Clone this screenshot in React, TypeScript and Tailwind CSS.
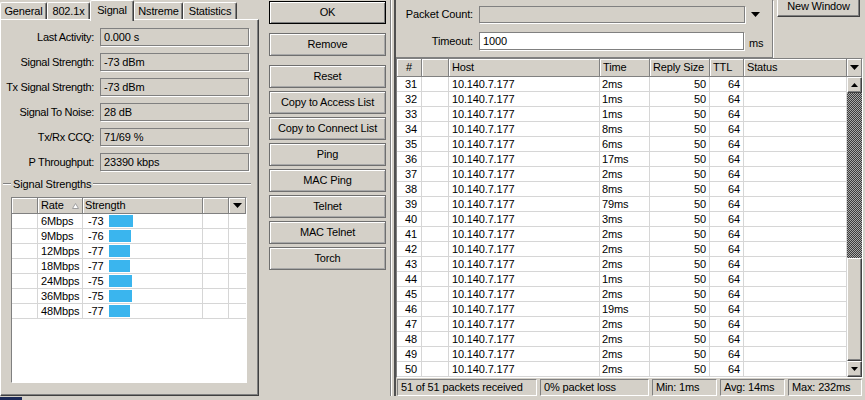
import React from "react";

// Classic Win98-style 3D edges, reused across the two windows.
const raised =
  "border border-t-white border-l-white border-r-[#404040] border-b-[#404040] shadow-[inset_-1px_-1px_0_#808080]";
const sunken = "border border-[#808080] border-r-white border-b-white";
const headCell =
  "h-full flex items-center border-r border-b border-[#808080] shadow-[inset_1px_1px_0_#fff]";
const gridCell = "h-full flex items-center border-r border-b border-[#d6d6d6]";

const tabs = [
  { label: "General", w: "w-[47px]" },
  { label: "802.1x", w: "w-[43px]" },
  { label: "Signal", w: "w-[44px]", active: true },
  { label: "Nstreme", w: "w-[49px]" },
  { label: "Statistics", w: "w-[54px]" },
];

const fields = [
  ["Last Activity:", "0.000 s"],
  ["Signal Strength:", "-73 dBm"],
  ["Tx Signal Strength:", "-73 dBm"],
  ["Signal To Noise:", "28 dB"],
  ["Tx/Rx CCQ:", "71/69 %"],
  ["P Throughput:", "23390 kbps"],
];

const rates = [
  { rate: "6Mbps", strength: -73, bar: 24 },
  { rate: "9Mbps", strength: -76, bar: 22 },
  { rate: "12Mbps", strength: -77, bar: 21 },
  { rate: "18Mbps", strength: -77, bar: 21 },
  { rate: "24Mbps", strength: -75, bar: 23 },
  { rate: "36Mbps", strength: -75, bar: 23 },
  { rate: "48Mbps", strength: -77, bar: 21 },
];

const buttons = [
  "Copy to Access List",
  "Copy to Connect List",
  "Ping",
  "MAC Ping",
  "Telnet",
  "MAC Telnet",
  "Torch",
];

const times = [
  "2ms", "1ms", "1ms", "8ms", "6ms", "17ms", "2ms", "8ms", "79ms", "3ms",
  "2ms", "2ms", "2ms", "1ms", "2ms", "19ms", "2ms", "2ms", "2ms", "2ms",
];

const DownArrow = () => (
  <svg width="9" height="5" viewBox="0 0 9 5">
    <polygon points="0,0 9,0 4.5,5" fill="#000" />
  </svg>
);

const UpArrow = () => (
  <svg width="7" height="4" viewBox="0 0 7 4">
    <polygon points="3.5,0 7,4 0,4" fill="#000" />
  </svg>
);

const Btn = ({ label, def }: { label: string; def?: boolean }) => (
  <div
    className={`h-[23px] w-[117px] flex items-center justify-center ${
      def
        ? "border border-black shadow-[inset_1px_1px_0_#fff,inset_-1px_-1px_0_#808080]"
        : "border border-[#6f6f6f] shadow-[inset_1px_1px_0_#fff,inset_-1px_-1px_0_#a8a8a8]"
    }`}
  >
    {label}
  </div>
);

function SignalPanel() {
  return (
    <div className="w-[259px] flex flex-col">
      <div className="relative z-10 flex h-[19px] items-end">
        {tabs.map((t) =>
          t.active ? (
            <div
              key={t.label}
              className={`${t.w} h-[21px] -mb-[2px] flex items-start justify-center pt-[4px] bg-[#d4d0c8] rounded-t-[2px] border-t border-l border-r border-t-white border-l-white border-r-[#404040] shadow-[inset_-1px_0_0_#808080]`}
            >
              {t.label}
            </div>
          ) : (
            <div
              key={t.label}
              className={`${t.w} h-[17px] flex items-center justify-center rounded-t-[2px] border-t border-l border-r border-t-white border-l-white border-r-[#404040] shadow-[inset_-1px_0_0_#808080]`}
            >
              {t.label}
            </div>
          )
        )}
      </div>
      <div className={`flex-1 flex flex-col pt-[8px] ${raised}`}>
        <div className="flex flex-col gap-[7px]">
          {fields.map(([label, value]) => (
            <div key={label} className="flex h-[18px] items-center">
              <div className="w-[93px] text-right whitespace-nowrap tracking-[-0.3px]">{label}</div>
              <div className="ml-[6px] w-[149px] h-[18px] flex items-center pl-[3px] border border-[#808080] shadow-[1px_1px_0_#fff]">
                {value}
              </div>
            </div>
          ))}
        </div>

        {/* Signal Strengths group */}
        <div className="mt-[7px] h-[12px] flex items-center">
          <div className="ml-[2px] w-[8px] h-[2px] border-t border-t-[#808080] border-b border-b-white" />
          <div className="px-[2px]">Signal Strengths</div>
          <div className="flex-1 mr-[7px] h-[2px] border-t border-t-[#808080] border-b border-b-white" />
        </div>

        <div className={`mt-[7px] ml-[10px] w-[236px] h-[186px] bg-white ${sunken}`}>
          <div className="flex h-[16px] bg-[#d4d0c8]">
            <div className={`${headCell} w-[26px]`} />
            <div className={`${headCell} w-[45px] pl-[3px] justify-between pr-[3px]`}>
              <span>Rate</span>
              <svg width="7" height="6" viewBox="0 0 7 6">
                <polygon points="3.5,0.5 6.5,5.5 0.5,5.5" fill="#fff" stroke="#a0a0a0" strokeWidth="1" />
              </svg>
            </div>
            <div className={`${headCell} w-[120px] pl-[2px]`}>Strength</div>
            <div className={`${headCell} w-[26px]`} />
            <div className={`${headCell} w-[17px] justify-center`}>
              <DownArrow />
            </div>
          </div>
          {rates.map((r) => (
            <div key={r.rate} className="flex h-[15px]">
              <div className={`${gridCell} w-[26px]`} />
              <div className={`${gridCell} w-[45px] pl-[3px]`}>{r.rate}</div>
              <div className={`${gridCell} w-[120px] pl-[5px]`}>
                <span className="w-[21px]">{r.strength}</span>
                <span className="h-[12px] bg-[#3ab5ee]" style={{ width: r.bar }} />
              </div>
              <div className={`${gridCell} w-[26px]`} />
              <div className="h-full w-[17px] border-b border-[#d6d6d6]" />
            </div>
          ))}
        </div>
      </div>
    </div>
  );
}

function PingWindow() {
  const cols = ["w-[25px]", "w-[27px]", "w-[151px]", "w-[50px]", "w-[60px]", "w-[34px]", "w-[103px]"];
  return (
    <div className="flex-1 flex flex-col">
      <div className="h-[58px] flex">
        <div className="w-[377px] h-[58px] border-r border-b border-[#808080] shadow-[1px_1px_0_#fff]">
          <div className="mt-[6px] h-[17px] flex items-center">
            <div className="w-[77px] text-right">Packet Count:</div>
            <div className="ml-[6px] w-[266px] h-[17px] border border-[#808080] shadow-[1px_1px_0_#fff]" />
            <div className="ml-[6px] flex items-center">
              <DownArrow />
            </div>
          </div>
          <div className="mt-[9px] h-[18px] flex items-center">
            <div className="w-[77px] text-right">Timeout:</div>
            <div className="ml-[6px] w-[265px] h-[18px] flex items-center pl-[3px] bg-white border border-[#808080] shadow-[1px_1px_0_#fff]">
              1000
            </div>
            <div className="ml-[5px] mt-[4px]">ms</div>
          </div>
        </div>
        <div className="ml-[4px] w-[83px] h-[17px] flex items-start justify-center pt-[1px] border-l border-r border-b border-l-white border-r-[#404040] border-b-[#404040] shadow-[inset_-1px_-1px_0_#808080]">
          New Window
        </div>
      </div>

      <div className={`w-[467px] h-[320px] flex flex-col ${sunken} shadow-[inset_1px_1px_0_#404040]`}>
        <div className="flex h-[18px] bg-[#d4d0c8]">
          <div className={`${headCell} ${cols[0]} justify-center`}>#</div>
          <div className={`${headCell} ${cols[1]}`} />
          <div className={`${headCell} ${cols[2]} pl-[3px]`}>Host</div>
          <div className={`${headCell} ${cols[3]} pl-[3px]`}>Time</div>
          <div className={`${headCell} ${cols[4]} pl-[3px]`}>Reply Size</div>
          <div className={`${headCell} ${cols[5]} pl-[3px]`}>TTL</div>
          <div className={`${headCell} ${cols[6]} pl-[3px]`}>Status</div>
          <div className={`${headCell} w-[15px] justify-center`}>
            <DownArrow />
          </div>
        </div>
        <div className="flex h-[300px]">
          <div className="w-[450px] bg-white">
            {times.map((t, i) => (
              <div key={i} className="flex h-[15px]">
                <div className={`${gridCell} ${cols[0]} justify-end pr-[4px]`}>{31 + i}</div>
                <div className={`${gridCell} ${cols[1]}`} />
                <div className={`${gridCell} ${cols[2]} pl-[3px]`}>10.140.7.177</div>
                <div className={`${gridCell} ${cols[3]} pl-[2px]`}>{t}</div>
                <div className={`${gridCell} ${cols[4]} justify-end pr-[3px]`}>50</div>
                <div className={`${gridCell} ${cols[5]} justify-end pr-[3px]`}>64</div>
                <div className={`${gridCell} ${cols[6]}`} />
              </div>
            ))}
          </div>
          <div className="w-[15px] flex flex-col">
            <div className={`h-[16px] flex items-center justify-center bg-[#d4d0c8] ${raised}`}>
              <UpArrow />
            </div>
            <div className="h-[165px] bg-[repeating-conic-gradient(#3c3c3c_0%_25%,#a8a8a8_0%_50%)] bg-[length:2px_2px]" />
            <div className={`h-[103px] bg-[#d4d0c8] ${raised}`} />
            <div className={`h-[16px] flex items-center justify-center bg-[#d4d0c8] ${raised}`}>
              <span className="rotate-180 flex">
                <UpArrow />
              </span>
            </div>
          </div>
        </div>
      </div>

      <div className="mt-[1px] h-[17px] flex gap-[3px] pl-[1px]">
        <div className={`w-[140px] flex items-center pl-[3px] ${sunken}`}>51 of 51 packets received</div>
        <div className={`w-[109px] flex items-center pl-[3px] ${sunken}`}>0% packet loss</div>
        <div className={`w-[65px] flex items-center pl-[3px] ${sunken}`}>Min: 1ms</div>
        <div className={`w-[65px] flex items-center pl-[3px] ${sunken}`}>Avg: 14ms</div>
        <div className={`w-[74px] flex items-center pl-[3px] ${sunken}`}>Max: 232ms</div>
      </div>
    </div>
  );
}

export default function App() {
  return (
    <div className="w-[865px] h-[400px] overflow-hidden bg-[#d4d0c8] text-[11px] leading-none tracking-[-0.15px] text-black font-['Liberation_Sans',Arial,sans-serif] flex flex-col">
      <div className="h-[396px] flex">
        <div className="w-[390px] flex">
          <SignalPanel />
          <div className="ml-[10px] pt-[1px] flex flex-col">
            <Btn label="OK" def />
            <div className="mt-[9px]">
              <Btn label="Remove" />
            </div>
            <div className="mt-[9px] flex flex-col gap-[3px]">
              <Btn label="Reset" />
              {buttons.map((b) => (
                <Btn key={b} label={b} />
              ))}
            </div>
          </div>
        </div>
        <div className="w-[6px] border-l border-l-[#808080] border-r-2 border-r-[#505050] shadow-[inset_1px_0_0_#fff]" />
        <PingWindow />
      </div>
      <div className="h-[4px] flex">
        <div className="mt-[1px] w-[22px] bg-[#1c2a58]" />
      </div>
    </div>
  );
}
